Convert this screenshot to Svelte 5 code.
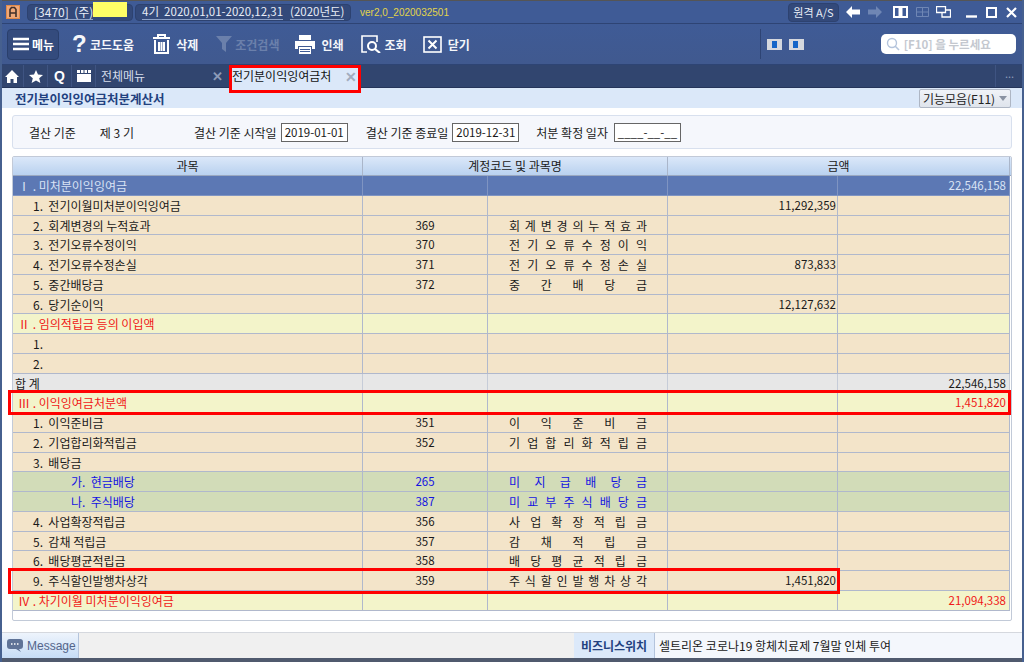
<script>
  const spread = (s) => s.split("").join(" ");

  // kind: blue | sand | yellow | green | total
  const rows = [
    { kind: "blue", indent: "l0", name: "Ⅰ . 미처분이익잉여금", total: "22,546,158" },
    { kind: "sand", indent: "l1", name: "1.  전기이월미처분이익잉여금", amount: "11,292,359" },
    { kind: "sand", indent: "l1", name: "2.  회계변경의 누적효과", code: "369", acct: "회계변경의누적효과" },
    { kind: "sand", indent: "l1", name: "3.  전기오류수정이익", code: "370", acct: "전기오류수정이익" },
    { kind: "sand", indent: "l1", name: "4.  전기오류수정손실", code: "371", acct: "전기오류수정손실", amount: "873,833" },
    { kind: "sand", indent: "l1", name: "5.  중간배당금", code: "372", acct: "중간배당금" },
    { kind: "sand", indent: "l1", name: "6.  당기순이익", amount: "12,127,632" },
    { kind: "yellow", indent: "l0", name: "Ⅱ . 임의적립금 등의 이입액" },
    { kind: "sand", indent: "l1", name: "1." },
    { kind: "sand", indent: "l1", name: "2." },
    { kind: "total", indent: "lt", name: "합 계", total: "22,546,158" },
    { kind: "yellow", indent: "l0", name: "Ⅲ . 이익잉여금처분액", total: "1,451,820" },
    { kind: "sand", indent: "l1", name: "1.  이익준비금", code: "351", acct: "이익준비금" },
    { kind: "sand", indent: "l1", name: "2.  기업합리화적립금", code: "352", acct: "기업합리화적립금" },
    { kind: "sand", indent: "l1", name: "3.  배당금" },
    { kind: "green", indent: "l2", name: "가.  현금배당", code: "265", acct: "미지급배당금" },
    { kind: "green", indent: "l2", name: "나.  주식배당", code: "387", acct: "미교부주식배당금" },
    { kind: "sand", indent: "l1", name: "4.  사업확장적립금", code: "356", acct: "사업확장적립금" },
    { kind: "sand", indent: "l1", name: "5.  감채 적립금", code: "357", acct: "감채적립금" },
    { kind: "sand", indent: "l1", name: "6.  배당평균적립금", code: "358", acct: "배당평균적립금" },
    { kind: "sand", indent: "l1", name: "9.  주식할인발행차상각", code: "359", acct: "주식할인발행차상각", amount: "1,451,820" },
    { kind: "yellow", indent: "l0", name: "Ⅳ . 차기이월 미처분이익잉여금", total: "21,094,338" }
  ];
</script>

<div class="app">
  <header class="titlebar">
    <svg class="logo" viewBox="0 0 14 14" width="14" height="14">
      <rect width="14" height="14" fill="#e0894a" />
      <rect x="1" y="1" width="12" height="12" fill="#f0a878" />
      <path d="M4 12V4.500L5.500 2.500h3L10 4.500V12M4 8h6" fill="none" stroke="#43312a" stroke-width="1.600" />
    </svg>
    <div class="pill company"><span class="pill-text">[3470]  (주)</span></div>
    <div class="pill period">
      <span class="pill-text">4기  2020,01,01-2020,12,31</span>
      <span class="pill-text">(2020년도)</span>
    </div>
    <span class="version">ver2,0_2020032501</span>
    <button class="remote">원격 A/S</button>
    <svg class="back" viewBox="0 0 14 12" width="14" height="12"><path d="M0 6 6 0v3.500h8v5H6V12z" fill="#fff" /></svg>
    <svg class="fwd" viewBox="0 0 14 12" width="14" height="12"><path d="M14 6 8 0v3.500H0v5h8V12z" fill="#6f86b4" /></svg>
    <svg class="book" viewBox="0 0 15 12" width="15" height="12"><path d="M1 1h5.500v10H1zM8.500 1H14v10H8.500z" fill="none" stroke="#fff" stroke-width="2" /></svg>
    <svg class="grid" viewBox="0 0 13 10" width="13" height="10"><path d="M.5.500h12v9H.500zM6.500.500v9M.5 5h12" fill="none" stroke="#6f86b4" /></svg>
    <svg class="cascade" viewBox="0 0 15 12" width="15" height="12"><path d="M.5.500h9v6h-9zM10 4h4.500v7H6V7" fill="none" stroke="#fff" stroke-width="1.300" /></svg>
    <svg class="min" viewBox="0 0 11 11" width="11" height="11"><path d="M0 9.500h11" stroke="#fff" stroke-width="2.400" /></svg>
    <svg class="max" viewBox="0 0 11 11" width="11" height="11"><rect x="1" y="1" width="9" height="9" fill="none" stroke="#fff" stroke-width="2" /></svg>
    <svg class="close" viewBox="0 0 11 11" width="11" height="11"><path d="M1 1l9 9M10 1l-9 9" stroke="#fff" stroke-width="2.200" /></svg>
  </header>

  <nav class="toolbar">
    <button class="menu-btn">
      <svg viewBox="0 0 16 14" width="16" height="14"><path d="M0 2h16M0 7h16M0 12h16" stroke="#fff" stroke-width="2.400" /></svg>
      <span>메뉴</span>
    </button>
    <div class="tool t-help">
      <span class="qmark">?</span><span>코드도움</span>
    </div>
    <div class="tool t-del">
      <svg viewBox="0 0 17 20" width="17" height="20"><path d="M0 4h17M5 4V1h7v3M2 6v13h13V6M6 8v9M8.500 8v9M11 8v9" fill="none" stroke="#fff" stroke-width="2" /></svg>
      <span>삭제</span>
    </div>
    <div class="tool t-filter dim">
      <svg viewBox="0 0 16 16" width="16" height="16"><path d="M0 0h16L10 7v9L6 13V7z" fill="#6b80ab" /></svg>
      <span>조건검색</span>
    </div>
    <div class="tool t-print">
      <svg viewBox="0 0 20 19" width="20" height="19"><path d="M4 0h12v5H4z" fill="#fff" /><path d="M0 6h20v8h-3v-3H3v3H0z" fill="#fff" /><path d="M4 12h12v7H4z" fill="#fff" /><path d="M5 14.500h10M5 16.500h10" stroke="#3f5b96" /></svg>
      <span>인쇄</span>
    </div>
    <div class="tool t-view">
      <svg viewBox="0 0 20 18" width="20" height="18"><path d="M6 17H1V1h15v6" fill="none" stroke="#fff" stroke-width="1.600" /><circle cx="11" cy="11" r="4" fill="none" stroke="#fff" stroke-width="2" /><path d="M14 14l5 4" stroke="#fff" stroke-width="2.200" /></svg>
      <span>조회</span>
    </div>
    <div class="tool t-close">
      <svg viewBox="0 0 19 17" width="19" height="17"><rect x="1" y="1" width="17" height="15" fill="none" stroke="#fff" stroke-width="1.600" /><path d="M5.500 4.500l8 8M13.500 4.500l-8 8" stroke="#fff" stroke-width="2" /></svg>
      <span>닫기</span>
    </div>
    <div class="tool-right">
      <svg viewBox="0 0 15 11" width="15" height="11"><rect width="15" height="11" fill="#d5d8de" /><rect x="5" y="2" width="5" height="7" fill="#1565c8" /></svg>
      <svg viewBox="0 0 15 11" width="15" height="11"><rect width="15" height="11" fill="#d5d8de" /><rect x="4" y="2" width="5" height="7" fill="#1565c8" /></svg>
    </div>
    <div class="search">
      <svg viewBox="0 0 14 14" width="14" height="14"><circle cx="6" cy="6" r="4.500" fill="none" stroke="#b4c4dc" stroke-width="1.400" /><path d="M9 9l4 4" stroke="#b4c4dc" stroke-width="1.600" /></svg>
      <span>[F10] 을 누르세요</span>
    </div>
  </nav>

  <div class="tabs">
    <div class="tab-ic">
      <svg viewBox="0 0 14 13" width="14" height="13"><path d="M7 0 0 7h2v6h3.500V9h3v4H12V7h2z" fill="#fff" /></svg>
    </div>
    <div class="tab-ic">
      <svg viewBox="0 0 14 13" width="14" height="13"><path d="M7 0l2 4.600 5 .4-3.800 3.200L11.400 13 7 10.400 2.600 13l1.200-4.800L0 5l5-.4z" fill="#fff" /></svg>
    </div>
    <div class="tab-ic q">Q</div>
    <div class="tab-ic">
      <svg viewBox="0 0 14 12" width="14" height="12"><path d="M0 0h14v3H0zM0 4h14v8H0z" fill="#fff" /><path d="M3.500 0v3M7 0v3M10.500 0v3" stroke="#31456f" /></svg>
    </div>
    <div class="tab">전체메뉴<span class="x">✕</span></div>
    <div class="tab active">전기분이익잉여금처<span class="x">✕</span></div>
    <div class="more">•••</div>
  </div>

  <div class="subhead">
    <h1>전기분이익잉여금처분계산서</h1>
    <button class="func">기능모음(F11)<i></i></button>
  </div>

  <main class="content">
    <section class="filter">
      <span class="f-basis">결산 기준</span>
      <span class="f-term">제 3 기</span>
      <label class="f-start">결산 기준 시작일<span class="date">2019-01-01</span></label>
      <label class="f-end">결산 기준 종료일<span class="date">2019-12-31</span></label>
      <label class="f-fix">처분 확정 일자<span class="date">____-__-__</span></label>
    </section>

    <section class="sheet">
      <div class="head">
        <div>과목</div>
        <div>계정코드 및 과목명</div>
        <div>금액</div>
      </div>
      {#each rows as r}
        <div class="row {r.kind}">
          <div class="cell name {r.indent}">{r.name}</div>
          <div class="cell code">{r.code ?? ""}</div>
          <div class="cell acct">{r.acct ? spread(r.acct) : ""}</div>
          <div class="cell num">{r.amount ?? ""}</div>
          <div class="cell num end">{r.total ?? ""}</div>
        </div>
      {/each}
    </section>
  </main>

  <footer class="status">
    <button class="msg">
      <svg viewBox="0 0 16 13" width="16" height="13"><path d="M3 0h10a3 3 0 0 1 3 3v4a3 3 0 0 1-3 3h-1l2 3-5-3H3a3 3 0 0 1-3-3V3a3 3 0 0 1 3-3z" fill="#5f7397" /><path d="M4 5h8" stroke="#fff" stroke-width="1.500" stroke-dasharray="1.500 1.500" /></svg>
      <span>Message</span>
    </button>
    <div class="gap"></div>
    <div class="biz">비즈니스위치</div>
    <div class="news">셀트리온 코로나19 항체치료제 7월말 인체 투여</div>
  </footer>

  <!-- overlays -->
  <div class="redact"></div>
  <div class="mark m-tab"></div>
  <div class="mark m-row3"></div>
  <div class="mark m-row9"></div>
</div>

<style>
  :global(body) {
    margin: 0;
  }
  .app {
    position: relative;
    width: 1024px;
    height: 662px;
    overflow: hidden;
    display: flex;
    flex-direction: column;
    background: #fff;
    box-sizing: border-box;
    border-left: 2px solid #46608f;
    border-right: 2px solid #46608f;
    font-family: "Noto Sans CJK KR", "Liberation Sans", sans-serif;
    font-size: 12px;
    color: #1a1a1a;
  }
  button {
    font-family: inherit;
    padding: 0;
    margin: 0;
  }
  .tool span,
  .menu-btn span {
    white-space: nowrap;
  }

  /* title bar */
  .titlebar {
    height: 24px;
    margin: 0 -2px;
    box-sizing: border-box;
    display: flex;
    align-items: center;
    background: #3f5b96;
    border-top: 1px solid #555;
    border-bottom: 1px solid #2e4474;
    flex: none;
    color: #e8edf6;
  }
  .logo {
    margin-left: 6px;
  }
  .pill {
    height: 17px;
    box-sizing: border-box;
    display: flex;
    align-items: center;
    gap: 7px;
    background: #33497a;
    border: 1px solid #2d4270;
    border-radius: 4px;
    padding: 0 6px;
    font-size: 12px;
    line-height: 13px;
  }
  .pill-text {
    border-bottom: 1px solid #8ea2c8;
    white-space: pre;
    height: 14px;
  }
  .company {
    margin-left: 7px;
    width: 106px;
  }
  .period {
    margin-left: 2px;
    width: 216px;
    font-size: 11.500px;
  }
  .version {
    margin-left: 9px;
    font-size: 10px;
    color: #e2d44c;
    font-family: "Liberation Sans", sans-serif;
  }
  .remote {
    margin-left: 339px;
    width: 51px;
    height: 19px;
    background: #33497a;
    border: 1px solid #2d4270;
    border-radius: 4px;
    color: #e8edf6;
    font-size: 11px;
  }
  .back {
    margin-left: 7px;
  }
  .fwd {
    margin-left: 8px;
  }
  .book {
    margin-left: 11px;
  }
  .grid {
    margin-left: 8px;
  }
  .cascade {
    margin-left: 7px;
  }
  .min {
    margin-left: 15px;
  }
  .max {
    margin-left: 9px;
  }
  .close {
    margin-left: 9px;
  }

  /* toolbar */
  .toolbar {
    height: 41px;
    margin: 0 -2px;
    box-sizing: border-box;
    flex: none;
    display: flex;
    align-items: center;
    background: linear-gradient(#3f5b96, #40598f);
    border-bottom: 1px solid #2e4474;
    color: #f4f6fa;
    font-size: 12px;
    font-weight: 700;
  }
  .menu-btn {
    margin-left: 7px;
    width: 52px;
    height: 31px;
    flex: none;
    display: flex;
    align-items: center;
    gap: 3px;
    padding-left: 5px;
    box-sizing: border-box;
    background: #344b7d;
    border: 1px solid #2a3f6c;
    border-radius: 4px;
    color: #fff;
    font-size: 12px;
    font-weight: 700;
  }
  .tool {
    display: flex;
    flex: none;
    align-items: center;
    gap: 4px;
  }
  .qmark {
    font-family: "Liberation Sans", sans-serif;
    font-size: 24px;
    font-weight: 700;
    width: 14px;
    line-height: 24px;
  }
  .t-help {
    margin-left: 13px;
  }
  .t-del {
    margin-left: 19px;
    gap: 6px;
  }
  .t-filter {
    margin-left: 18px;
    gap: 3px;
  }
  .dim {
    color: #6b80ab;
  }
  .t-print {
    margin-left: 16px;
    gap: 6px;
  }
  .t-view {
    margin-left: 17px;
    gap: 4px;
  }
  .t-close {
    margin-left: 16px;
    gap: 6px;
  }
  .tool-right {
    margin-left: 290px;
    height: 30px;
    padding-left: 6px;
    display: flex;
    flex: none;
    align-items: center;
    gap: 7px;
    border-left: 1px solid #2e4474;
  }
  .search {
    margin-left: 77px;
    width: 135px;
    height: 20px;
    flex: none;
    box-sizing: border-box;
    display: flex;
    align-items: center;
    gap: 4px;
    padding-left: 5px;
    background: #fff;
    border-radius: 5px;
    color: #c4c8cf;
    font-size: 11.500px;
    font-weight: 700;
    white-space: nowrap;
  }

  /* tabs */
  .tabs {
    height: 23px;
    margin: 0 -2px;
    box-sizing: border-box;
    flex: none;
    display: flex;
    align-items: stretch;
    background: #31456f;
    border-bottom: 1px solid #25355a;
    color: #d6deec;
  }
  .tab-ic {
    width: 24px;
    display: flex;
    align-items: center;
    justify-content: center;
    border-right: 1px solid #3f5482;
    box-sizing: border-box;
  }
  .tab-ic.q {
    color: #fff;
    font-weight: 700;
    font-size: 14px;
    font-family: "Liberation Sans", sans-serif;
  }
  .tab {
    width: 133px;
    box-sizing: border-box;
    padding-left: 5px;
    position: relative;
    line-height: 22px;
  }
  .tab .x {
    position: absolute;
    top: 0;
    right: 6px;
    font-size: 13px;
    font-weight: 700;
    color: #8d9bb8;
  }
  .tab.active {
    width: 131px;
    height: 26px;
    padding-left: 3px;
    background: #dbe8f9;
    color: #111;
  }
  .tab.active .x {
    right: 3px;
    color: #a2acbe;
    font-size: 14px;
  }
  .more {
    margin-left: auto;
    width: 28px;
    border-left: 1px solid #3f5482;
    text-align: center;
    font-size: 6px;
    line-height: 24px;
    letter-spacing: 1px;
    color: #8d9bb8;
  }

  /* page head */
  .subhead {
    height: 20px;
    flex: none;
    display: flex;
    align-items: center;
    justify-content: space-between;
    padding: 0 11px 0 13px;
    background: #dbe8f9;
  }
  h1 {
    margin: 0;
    font-size: 12.500px;
    font-weight: 700;
    color: #22417f;
  }
  .func {
    width: 92px;
    height: 19px;
    display: flex;
    align-items: center;
    gap: 4px;
    justify-content: center;
    background: linear-gradient(#f0f3f8, #dfe4ec);
    border: 1px solid #aeb6c4;
    border-radius: 2px;
    font-size: 12px;
    color: #222;
    font-weight: 400;
  }
  .func i {
    width: 0;
    height: 0;
    border: 4px solid transparent;
    border-top: 5px solid #8a93a3;
    border-bottom: 0;
  }

  /* filter */
  .content {
    flex: 1;
    padding: 7px 10px 0;
  }
  .filter {
    height: 34px;
    box-sizing: border-box;
    display: flex;
    align-items: center;
    background: #f5f7fc;
    border: 1px solid #d8e0ee;
    border-radius: 3px;
  }
  .filter label {
    display: flex;
    align-items: center;
    gap: 4px;
    white-space: nowrap;
  }
  .f-basis {
    margin-left: 16px;
  }
  .f-term {
    margin-left: 24px;
  }
  .f-start {
    margin-left: 60px;
  }
  .f-end {
    margin-left: 18px;
  }
  .f-fix {
    margin-left: 17px;
  }
  .filter .f-fix {
    gap: 6px;
  }
  .date {
    width: 67px;
    height: 19px;
    box-sizing: border-box;
    display: block;
    text-align: center;
    line-height: 17px;
    background: #fff;
    border: 1px solid #666;
    font-size: 11.500px;
  }

  /* sheet */
  .sheet {
    margin-top: 7px;
    width: 1000px;
    height: 465px;
    box-sizing: border-box;
    border: 1px solid #c2cad8;
    border-radius: 2px;
    overflow: hidden;
  }
  .head {
    display: grid;
    grid-template-columns: 350px 305px 342px;
    height: 19px;
    background: linear-gradient(#dbe8f9, #b9d1ef);
    border-bottom: 1px solid #9aa8c0;
    box-sizing: border-box;
  }
  .head div {
    text-align: center;
    line-height: 18px;
    border-right: 1px solid #aab6ca;
  }
  .row {
    display: grid;
    grid-template-columns: 350px 125px 180px 170px 172px;
    height: 19.750px;
  }
  .cell {
    box-sizing: border-box;
    height: 100%;
    line-height: 19px;
    white-space: pre;
    overflow: hidden;
    border-right: 1px solid #b0b8cc;
    border-bottom: 1px solid #b0b8cc;
  }
  .l0 {
    padding-left: 5px;
  }
  .l1 {
    padding-left: 20px;
  }
  .l2 {
    padding-left: 58px;
  }
  .lt {
    padding-left: 2px;
  }
  .code {
    text-align: center;
    font-size: 11.500px;
  }
  .acct {
    padding: 0 20px 0 21px;
    white-space: normal;
    text-align: justify;
    text-align-last: justify;
  }
  .num {
    text-align: right;
    padding-right: 1px;
    font-size: 11.500px;
  }
  .end {
    padding-right: 3px;
  }
  .blue .cell {
    background: #5c78b4;
    color: #d9e3f5;
    border-color: #7f94c2;
  }
  .sand .cell {
    background: #f3e4c9;
  }
  .yellow .cell {
    background: #f3f4ca;
    color: #f01818;
  }
  .green .cell {
    background: #d2dcb8;
    color: #1414e0;
  }
  .total .cell {
    background: #e7e7e7;
    border-color: #c6ccd8;
  }

  /* status */
  .status {
    height: 30px;
    flex: none;
    margin: 0 -2px 0;
    display: flex;
    background: #f0f0f0;
    border-top: 1px solid #d5d8de;
    border-bottom: 4px solid #505a6e;
    box-sizing: border-box;
  }
  .msg {
    margin-left: 2px;
    width: 77px;
    display: flex;
    align-items: center;
    gap: 4px;
    padding-left: 5px;
    box-sizing: border-box;
    background: linear-gradient(#eef4fc, #c6dcf6);
    border: 0;
    border-right: 1px solid #b4c4dc;
    color: #54658a;
    font-size: 12px;
    font-family: "Liberation Sans", sans-serif;
  }
  .gap {
    flex: 1;
  }
  .biz {
    width: 81px;
    text-align: center;
    line-height: 25px;
    background: #dce9fa;
    border-right: 1px solid #b4c4dc;
    color: #22417f;
    font-weight: 700;
    box-sizing: border-box;
  }
  .news {
    width: 369px;
    padding-left: 4px;
    line-height: 25px;
    background: #f4f7fc;
    white-space: nowrap;
    box-sizing: border-box;
  }

  /* overlays */
  .redact {
    position: absolute;
    left: 91px;
    top: 2px;
    width: 34px;
    height: 15px;
    background: #ffff66;
  }
  .mark {
    position: absolute;
    box-sizing: border-box;
    border: 3px solid #f00;
  }
  .m-tab {
    left: 227px;
    top: 65px;
    width: 132px;
    height: 28px;
  }
  .m-row3 {
    left: 6px;
    top: 390px;
    width: 1003px;
    height: 25px;
  }
  .m-row9 {
    left: 6px;
    top: 568px;
    width: 832px;
    height: 26px;
  }
</style>
